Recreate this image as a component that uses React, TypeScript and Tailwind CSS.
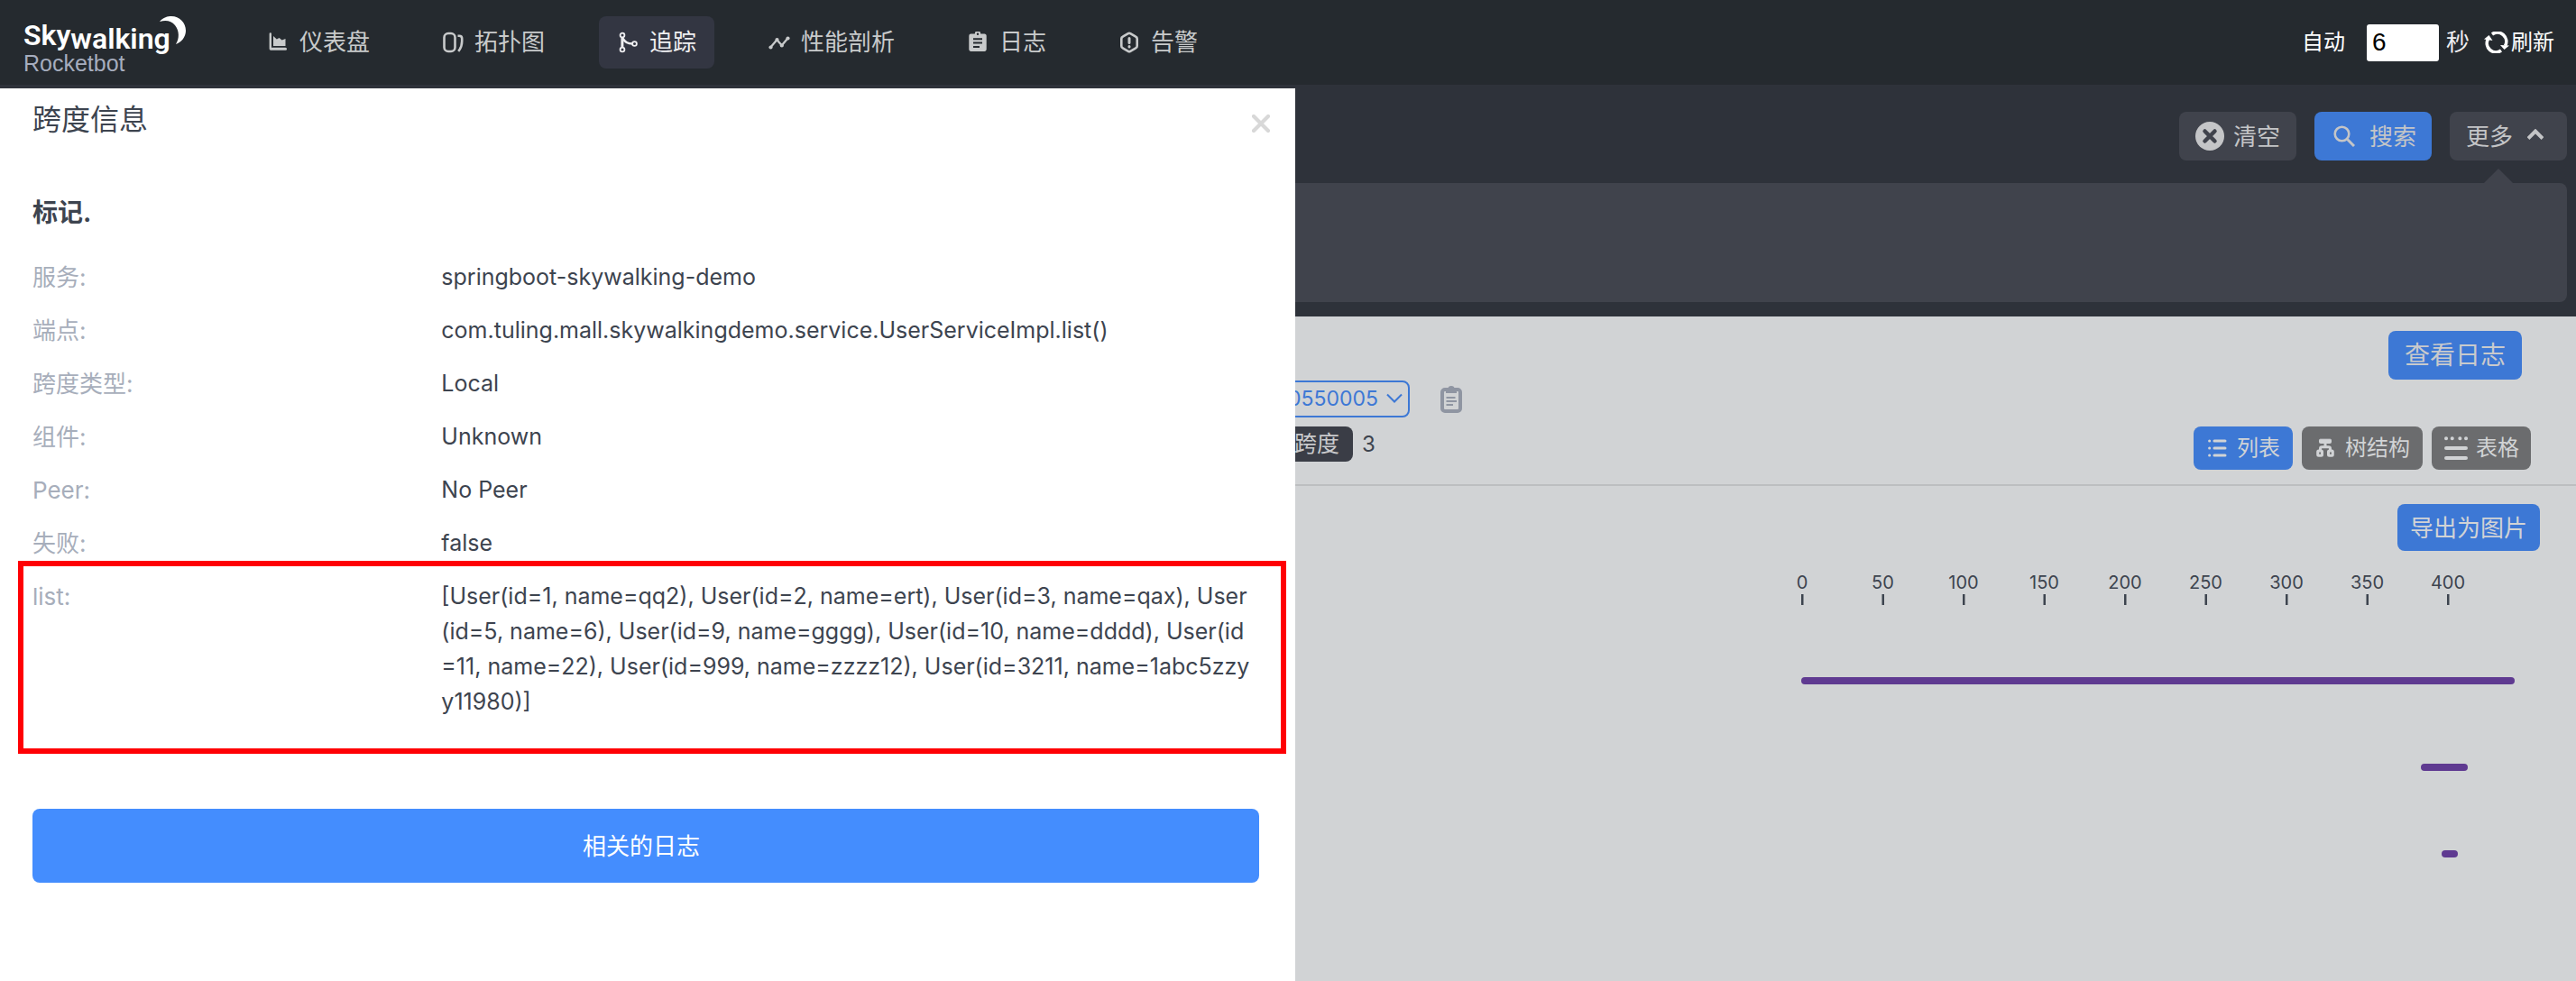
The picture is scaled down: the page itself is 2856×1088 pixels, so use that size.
import React from 'react';

type IconProps = { className?: string };

const DashboardIcon = () => (
  <svg viewBox="0 0 24 24" className="size-6 shrink-0" fill="currentColor" aria-hidden="true">
    <path d="M5 2.500v15.200h15.500a1.500 1.500 0 0 1 0 3.100H4.600A1.800 1.800 0 0 1 2.600 19V2.500a1.200 1.200 0 0 1 2.400 0z" />
    <path d="M7 5l3.800 3.400 2.800-1.400 3 2.600L20.500 8v8H7z" />
  </svg>
);

const TopologyIcon = () => (
  <svg viewBox="0 0 24 24" className="size-6 shrink-0" fill="none" stroke="currentColor" strokeWidth="2.600" aria-hidden="true">
    <rect x="2.500" y="2" width="12" height="20" rx="4.500" />
    <path d="M17.500 4.800h1.700q3 0 3 3v3q0 6.500-4 11" />
  </svg>
);

const TraceIcon = () => (
  <svg viewBox="0 0 24 24" className="size-6 shrink-0" fill="none" stroke="currentColor" strokeWidth="1.800" aria-hidden="true">
    <circle cx="6" cy="4" r="2.400" />
    <circle cx="6" cy="20" r="2.400" />
    <circle cx="19.500" cy="13.500" r="2.400" />
    <path d="M5.900 7v10" strokeWidth="3" />
    <path d="M6.500 7.500c2 4 6 6 10.500 6" strokeWidth="2.600" />
  </svg>
);

const ProfileIcon = () => (
  <svg viewBox="0 0 24 24" className="size-6 shrink-0" fill="currentColor" aria-hidden="true">
    <path d="M2.500 17.300L9.300 9.300l5.500 6 7-8.300" fill="none" stroke="currentColor" strokeWidth="2.300" />
    <circle cx="2.500" cy="17.500" r="2.100" />
    <circle cx="9.500" cy="9" r="2.100" />
    <circle cx="14.800" cy="15.500" r="2.100" />
    <circle cx="21.500" cy="7.500" r="2.100" />
  </svg>
);

const LogIcon = () => (
  <svg viewBox="0 0 24 24" className="size-6 shrink-0" fill="currentColor" aria-hidden="true">
    <path
      fillRule="evenodd"
      d="M19.500 2.500h-4.300a3.200 3.200 0 0 0-6.400 0H4.500a2.200 2.200 0 0 0-2.200 2.200v15.100c0 1.200 1 2.200 2.200 2.200h15c1.200 0 2.200-1 2.200-2.200V4.700c0-1.200-1-2.200-2.200-2.200zM12 1.600a1.200 1.200 0 1 1 0 2.400 1.200 1.200 0 0 1 0-2.400zM7 7.200h10v2H7zm0 4.300h10v2H7zm0 4.500h7v2H7z"
    />
  </svg>
);

const AlarmIcon = () => (
  <svg viewBox="0 0 24 24" className="size-6 shrink-0" aria-hidden="true">
    <path
      d="M10.800 2.200a2.400 2.400 0 0 1 2.400 0l6 3.500A2.400 2.400 0 0 1 20.700 8v8a2.400 2.400 0 0 1-1.500 2.300l-6 3.500a2.400 2.400 0 0 1-2.400 0l-6-3.500A2.400 2.400 0 0 1 3.300 16V8a2.400 2.400 0 0 1 1.500-2.300z"
      fill="none"
      stroke="currentColor"
      strokeWidth="2.600"
      strokeLinejoin="round"
    />
    <path d="M12 7.500v5M12 16.500v.5" stroke="currentColor" strokeWidth="3" strokeLinecap="round" />
  </svg>
);

const RefreshIcon = () => (
  <svg viewBox="0 0 28 24" className="h-6 w-7 shrink-0" aria-hidden="true">
    <g fill="none" stroke="currentColor" strokeWidth="3.600">
      <path d="M9 2.900a10 10 0 0 1 14.500 13" />
      <path d="M19 21.100a10 10 0 0 1-14.500-13" />
    </g>
    <path d="M0 8.500L5.500 4l4 6z" fill="currentColor" />
    <path d="M28 15.500L22.500 20l-4.500-5z" fill="currentColor" />
  </svg>
);

const ClearIcon = () => (
  <svg viewBox="0 0 32 32" className="size-8" aria-hidden="true">
    <circle cx="16" cy="16" r="16" fill="#c4c5c7" />
    <path d="M10.500 10.500l11 11m0-11l-11 11" stroke="#40434c" strokeWidth="4.500" strokeLinecap="round" />
  </svg>
);

const SearchIcon = () => (
  <svg viewBox="0 0 24 24" className="size-6" fill="none" stroke="currentColor" strokeWidth="2.600" aria-hidden="true">
    <circle cx="9.500" cy="9.500" r="7.800" />
    <path d="M15 15l8 8" strokeWidth="3" />
  </svg>
);

const ChevronIcon = ({ className }: IconProps) => (
  <svg viewBox="0 0 18 12" className={className} fill="none" stroke="currentColor" aria-hidden="true">
    <path d="M1 1.500l8 8 8-8" />
  </svg>
);

const ListIcon = () => (
  <svg viewBox="0 0 24 24" className="size-6" stroke="currentColor" strokeWidth="3" strokeLinecap="round" aria-hidden="true">
    <path d="M9 4h12M9 12h12M9 20h12M3.600 4h.1M3.600 12h.1M3.600 20h.1" />
  </svg>
);

const TreeIcon = () => (
  <svg viewBox="0 0 24 24" className="size-6" fill="none" stroke="currentColor" aria-hidden="true">
    <rect x="5.500" y="2.200" width="13" height="4.300" rx="1" fill="currentColor" strokeWidth="1" />
    <path d="M12 6v5M6.500 15v-2.500q0-1.800 2-1.800h7q2 0 2 1.800V15" strokeWidth="3" />
    <rect x="3.700" y="15" width="4.800" height="5.200" rx="1" strokeWidth="3" />
    <rect x="15.500" y="15" width="4.800" height="5.200" rx="1" strokeWidth="3" />
  </svg>
);

const TableIcon = () => (
  <svg viewBox="0 0 28 28" className="size-7" stroke="currentColor" strokeWidth="4" strokeLinecap="round" aria-hidden="true">
    <path d="M3 3.300h.1M9.700 3.300h.1M18.300 3.300h.1M25 3.300h.1M3 14h22M3 25h22" />
  </svg>
);

const ClipboardIcon = () => (
  <svg viewBox="0 0 24 30" className="h-[30px] w-6" fill="none" stroke="currentColor" aria-hidden="true">
    <rect x="2" y="4" width="20" height="24" rx="3" strokeWidth="4" />
    <path d="M6 8V3h2.500a3.500 3 0 0 1 7 0H18v5z" fill="currentColor" stroke="none" />
    <path d="M6.500 13h10M6.500 17h11.500M6.500 21h7.500" strokeWidth="2" />
  </svg>
);

const Logo = () => (
  <svg viewBox="0 0 184 76" className="h-[76px] w-[184px]" role="img" aria-label="Skywalking Rocketbot">
    <text x="0" y="41" fill="#fff" fontFamily="Roboto, sans-serif" fontWeight="600" fontSize="32">
      Sky<tspan dy="4">walking</tspan>
    </text>
    <path d="M151 15C155 10 160 9 164 9C173 9 180 16 180 25C180 32 175 38 169 40C173 34 173 25 168 19C164 14 158 13 151 15z" fill="#fff" />
    <text x="0" y="70" fill="#a6adbe" fontFamily="'Liberation Sans', sans-serif" fontSize="25">Rocketbot</text>
  </svg>
);

const navItems = [
  { label: '仪表盘', Icon: DashboardIcon },
  { label: '拓扑图', Icon: TopologyIcon },
  { label: '追踪', Icon: TraceIcon, active: true },
  { label: '性能剖析', Icon: ProfileIcon },
  { label: '日志', Icon: LogIcon },
  { label: '告警', Icon: AlarmIcon },
];

const tags = [
  ['服务', 'springboot-skywalking-demo'],
  ['端点', 'com.tuling.mall.skywalkingdemo.service.UserServiceImpl.list()'],
  ['跨度类型', 'Local'],
  ['组件', 'Unknown'],
  ['Peer', 'No Peer'],
  ['失败', 'false'],
];

const listLines = [
  '[User(id=1, name=qq2), User(id=2, name=ert), User(id=3, name=qax), User',
  '(id=5, name=6), User(id=9, name=gggg), User(id=10, name=dddd), User(id',
  '=11, name=22), User(id=999, name=zzzz12), User(id=3211, name=1abc5zzy',
  'y11980)]',
];

const ticks = [0, 50, 100, 150, 200, 250, 300, 350, 400];
const spans = [
  { start: 0, width: 791 },
  { start: 687, width: 52 },
  { start: 710, width: 18 },
];

function Header() {
  return (
    <header className="flex h-[94px] items-center bg-[#252a2f] pr-6 pl-[26px]">
      <a href="#home"><Logo /></a>
      <nav className="ml-[66px] flex gap-10">
        {navItems.map(({ label, Icon, active }) => (
          <a
            key={label}
            href={`#${label}`}
            className={`flex h-[58px] items-center gap-3 rounded-lg px-5 text-[26px] leading-[38px] ${active ? 'bg-[#333642] text-[#efeff1]' : 'text-[#c8cacb]'}`}
          >
            <Icon />
            <span>{label}</span>
          </a>
        ))}
      </nav>
      <div className="ml-auto flex items-center text-2xl text-white">
        <label htmlFor="interval">自动</label>
        <input id="interval" defaultValue="6" className="ml-6 h-[41px] w-20 rounded-[3px] bg-white px-1.5 font-['Liberation_Sans',sans-serif] text-[28px] text-black outline-none" />
        <span className="ml-2 text-[26px] text-[#efeff1]">秒</span>
        <button type="button" className="ml-4 flex items-center gap-0.5">
          <RefreshIcon />
          刷新
        </button>
      </div>
    </header>
  );
}

function SpanDrawer() {
  return (
    <aside className="bg-white pr-10 pl-9 text-[#3d444f]">
      <div className="flex h-[70px] items-center justify-between">
        <h1 className="text-[32px] leading-[48px]">跨度信息</h1>
        <button type="button" aria-label="关闭" className="-mr-4 mt-2 p-1 text-[#d8d8d8]">
          <svg viewBox="0 0 20 20" className="size-5" aria-hidden="true">
            <path d="M2 2l16 16M18 2L2 18" stroke="currentColor" strokeWidth="4.200" strokeLinecap="round" />
          </svg>
        </button>
      </div>
      <h2 className="mt-12 text-[28px] leading-[40px] font-bold">标记.</h2>
      <dl className="mt-8 flex flex-col gap-5 text-[25px] leading-[39px]">
        {tags.map(([label, value]) => (
          <div key={label} className="grid grid-cols-3">
            <dt className="text-[26px] text-[#a7aebb]">{label}:</dt>
            <dd className="col-span-2">{value}</dd>
          </div>
        ))}
        <div className="relative grid grid-cols-3 pb-8">
          <dt className="text-[26px] text-[#a7aebb]">list:</dt>
          <dd className="col-span-2 whitespace-nowrap">
            {listLines.map((line) => (
              <span key={line} className="block">{line}</span>
            ))}
          </dd>
          <div className="pointer-events-none absolute -top-5 -right-[30px] -bottom-1.5 -left-4 border-[6px] border-[#ff0004]" />
        </div>
      </dl>
      <button type="button" className="mt-[67px] h-[82px] w-full rounded-lg bg-[#448dfe] pr-2.5 text-[26px] text-white">
        相关的日志
      </button>
    </aside>
  );
}

function SearchPanel() {
  return (
    <section className="h-[253px] bg-[#2e323a] pt-[26px] pr-2.5 text-[26px] text-[#c4c5c7]">
      <div className="flex justify-end gap-5">
        <button type="button" className="flex h-[54px] w-[130px] items-center justify-center gap-2.5 rounded-lg bg-[#40434c]">
          <ClearIcon />
          清空
        </button>
        <button type="button" className="flex h-[54px] w-[130px] items-center justify-center gap-4 rounded-lg bg-[#3d78d5] pl-1">
          <SearchIcon />
          搜索
        </button>
        <button type="button" className="flex h-[54px] w-[130px] items-center gap-4 rounded-lg bg-[#40434c] pl-4.5">
          更多
          <ChevronIcon className="mb-1 h-3 w-[18px] rotate-180 stroke-4" />
        </button>
      </div>
      <div className="relative mt-[25px] h-[132px] rounded-r-lg bg-[#40434c]">
        <span className="absolute right-[60px] bottom-full border-x-16 border-b-16 border-x-transparent border-b-[#40434c]" />
      </div>
    </section>
  );
}

function TraceSummary() {
  return (
    <section className="border-b-2 border-[#bcbec0] pt-4 pb-4">
      <div className="flex justify-end pr-[60px]">
        <button type="button" className="h-[54px] w-[148px] rounded-lg bg-[#3d78d5] text-[28px] text-[#c9cacc]">
          查看日志
        </button>
      </div>
      <div className="mt-px flex h-[41px] items-center">
        <div className="relative -ml-5 text-[#3d78d5]">
          <select aria-label="追踪 ID" className="h-[41px] w-[147px] appearance-none rounded-lg border-2 border-[#3d78d5] pl-2.5 text-[23px] leading-[37px]">
            <option>0550005</option>
          </select>
          <ChevronIcon className="pointer-events-none absolute top-3.5 right-2 h-3 w-[18px] stroke-2" />
        </div>
        <button type="button" aria-label="复制" className="ml-[34px] text-[#8f95a2]"><ClipboardIcon /></button>
      </div>
      <div className="mt-2.5 flex items-start pr-[50px]">
        <span className="-ml-5 flex h-[39px] w-[84px] items-center justify-end rounded-lg bg-[#3a3d46] pr-[15px] text-[25px] text-[#c9cacc]">跨度</span>
        <span className="ml-2.5 text-[24px] leading-[39px] text-[#3d444f]">3</span>
        <div className="ml-auto flex gap-2.5 text-2xl text-[#d1d3d5]">
          <button type="button" className="flex h-12 w-[110px] items-center justify-center gap-2.5 rounded-lg bg-[#3d78d5]">
            <ListIcon />
            列表
          </button>
          <button type="button" className="flex h-12 w-[134px] items-center justify-center gap-2.5 rounded-lg bg-[#6b6c6e]">
            <TreeIcon />
            树结构
          </button>
          <button type="button" className="flex h-12 w-[110px] items-center justify-center gap-2 rounded-lg bg-[#6b6c6e]">
            <TableIcon />
            表格
          </button>
        </div>
      </div>
    </section>
  );
}

function TraceTimeline() {
  return (
    <section className="flex flex-col items-end pt-5 pr-10">
      <button type="button" className="h-[52px] w-[158px] rounded-lg bg-[#3d78d5] text-[26px] text-[#d1d3d5]">
        导出为图片
      </button>
      <svg viewBox="0 0 840 340" className="mt-5 h-[340px] w-[840px]" role="img" aria-label="跨度时间轴">
        {ticks.map((t) => {
          const x = 22 + t * 1.79;
          return (
            <g key={t} fill="#3d444f">
              <text x={x} y="22" textAnchor="middle" fontSize="20">{t}</text>
              <rect x={x - 1} y="28" width="2.500" height="12" />
            </g>
          );
        })}
        {spans.map((s, i) => (
          <rect key={s.start} x={21 + s.start} y={120 + i * 96} width={s.width} height="8" rx="4" fill="#5f3a91" />
        ))}
      </svg>
    </section>
  );
}

export default function App() {
  return (
    <div className="flex min-h-screen flex-col bg-[#2e323a] font-['Inter','Noto_Sans_CJK_SC',sans-serif]">
      <Header />
      <div className="mt-1 grid flex-1 grid-cols-[1436fr_1420fr]">
        <SpanDrawer />
        <main className="min-w-0 overflow-hidden bg-[#d1d3d5]">
          <SearchPanel />
          <TraceSummary />
          <TraceTimeline />
        </main>
      </div>
    </div>
  );
}
